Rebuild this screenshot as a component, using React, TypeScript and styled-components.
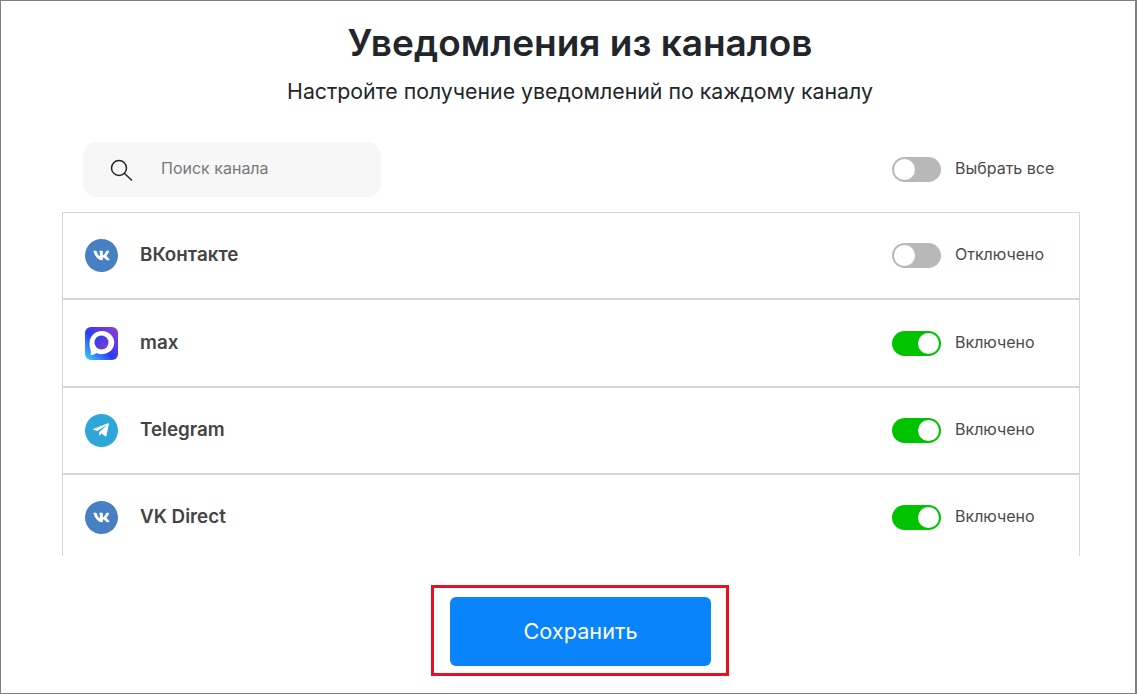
import React, { useState } from "react";
import styled, { createGlobalStyle } from "styled-components";
import { FaVk, FaTelegramPlane } from "react-icons/fa";

const GlobalStyle = createGlobalStyle`
  html, body {
    margin: 0;
    padding: 0;
    background: #fff;
    font-family: Inter, "Liberation Sans", sans-serif;
  }
  * { box-sizing: border-box; }
`;

const Page = styled.div`
  width: 1137px;
  height: 694px;
  border: 1px solid #808080;
  border-width: 1px 2px 1px 1px;
  background: #fff;
  padding-left: 24px;
  display: flex;
  flex-direction: column;
  align-items: center;
  overflow: hidden;
`;

const Title = styled.h1`
  margin: 17px 0 0;
  font-size: 37px;
  line-height: 50px;
  font-weight: 600;
  color: #22262a;
`;

const Subtitle = styled.p`
  margin: 8px 0 0;
  font-size: 21.3px;
  line-height: 30px;
  font-weight: 400;
  color: #22262a;
`;

const Content = styled.div`
  align-self: flex-start;
  margin: 0 0 0 37px;
  width: 1018px;
`;

const Toolbar = styled.div`
  display: flex;
  align-items: center;
  justify-content: space-between;
  height: 55px;
  margin-top: 36px;
  padding: 0 25px 0 21px;
`;

const Search = styled.div`
  width: 298px;
  height: 55px;
  border-radius: 14px;
  background: #f7f7f7;
  display: flex;
  align-items: center;
  gap: 28px;
  padding-left: 26px;
`;

const SearchInput = styled.input`
  border: 0;
  outline: 0;
  background: transparent;
  width: 200px;
  padding: 0 0 4px;
  font: 400 16px Inter, "Liberation Sans", sans-serif;
  color: #22262a;
  &::placeholder {
    color: #77797c;
    opacity: 1;
  }
`;

const List = styled.div`
  margin-top: 15px;
  height: 344px;
  overflow: hidden;
`;

const Row = styled.div`
  height: 87.4px;
  border: 1px solid #d6d6d6;
  display: flex;
  align-items: center;
  padding: 0 0 0 22px;
`;

const ChannelBadge = styled.span<{ $bg: string }>`
  width: 33px;
  height: 33px;
  border-radius: 50%;
  background: ${(p) => p.$bg};
  color: #fff;
  flex: none;
  display: flex;
  align-items: center;
  justify-content: center;
`;

const ChannelName = styled.span`
  margin-left: 22px;
  padding-bottom: 2px;
  font-size: 18.8px;
  font-weight: 600;
  color: #444444;
  flex: 1;
`;

const ToggleWrap = styled.label<{ $width: number }>`
  display: flex;
  align-items: center;
  gap: 14px;
  width: ${(p) => p.$width}px;
  cursor: pointer;
`;

const ToggleTrack = styled.span<{ $on: boolean }>`
  width: 49px;
  height: 25px;
  border-radius: 13px;
  background: ${(p) => (p.$on ? "#00c300" : "#b8b8b8")};
  padding: 2px;
  display: flex;
  justify-content: ${(p) => (p.$on ? "flex-end" : "flex-start")};
  flex: none;
`;

const ToggleKnob = styled.span`
  width: 21px;
  height: 21px;
  border-radius: 50%;
  background: #fff;
`;

const ToggleText = styled.span`
  padding-bottom: 3px;
  font-size: 16px;
  color: #4a4a4a;
  white-space: nowrap;
`;

const SaveHighlight = styled.div`
  margin-top: 29px;
  width: 298px;
  height: 91px;
  border: 3px solid #e81123;
  padding: 9px 15px 7px 16px;
`;

const SaveButton = styled.button`
  width: 100%;
  height: 100%;
  border: 0;
  border-radius: 6px;
  background: #0a84fa;
  color: #fff;
  font: 400 21.7px Inter, "Liberation Sans", sans-serif;
  padding: 0 0 2px;
  cursor: pointer;
`;

const MaxLogo = () => (
  <svg width="33" height="33" viewBox="0 0 33 33">
    <defs>
      <linearGradient id="maxBg" x1="0" y1="1" x2="1" y2="0">
        <stop offset="0" stopColor="#3fd8f8" />
        <stop offset="0.45" stopColor="#2a3cf5" />
        <stop offset="1" stopColor="#9a3ad0" />
      </linearGradient>
      <linearGradient id="maxDot" x1="0" y1="0" x2="1" y2="1">
        <stop offset="0" stopColor="#1f40f0" />
        <stop offset="1" stopColor="#8a3ad8" />
      </linearGradient>
    </defs>
    <rect width="33" height="33" rx="6" fill="url(#maxBg)" />
    <path
      d="M17 4C9.800 4 4.500 9.300 4.500 16.300c0 2.600.4 4.600 1 6.400.5 1.600.4 3.400.1 5.300 2.200.1 4.200-.6 5.800-2 1.700.8 3.600 1.200 5.600 1.200 7 0 12.300-5.300 12.300-11.600S24 4 17 4z"
      fill="#fff"
    />
    <circle cx="16.500" cy="15.500" r="7" fill="url(#maxDot)" />
  </svg>
);

const SearchIcon = () => (
  <svg width="24" height="24" viewBox="0 0 24 24" fill="none" stroke="#22262a" strokeWidth="1.500">
    <circle cx="10" cy="10" r="7.500" />
    <path d="M15.500 15.500l7 6.500" strokeLinecap="round" />
  </svg>
);

const channels = [
  { name: "ВКонтакте", kind: "vk", on: false },
  { name: "max", kind: "max", on: true },
  { name: "Telegram", kind: "tg", on: true },
  { name: "VK Direct", kind: "vk", on: true },
];

const ChannelIcon = ({ kind }: { kind: string }) => {
  if (kind === "max") return <MaxLogo />;
  if (kind === "tg") {
    return (
      <ChannelBadge $bg="#2ea6da">
        <FaTelegramPlane size={18} style={{ marginLeft: -2 }} />
      </ChannelBadge>
    );
  }
  return (
    <ChannelBadge $bg="#4680c2">
      <FaVk size={17} />
    </ChannelBadge>
  );
};

const Toggle = ({
  on,
  label,
  width,
  onClick,
}: {
  on: boolean;
  label: string;
  width: number;
  onClick: () => void;
}) => (
  <ToggleWrap $width={width} onClick={onClick}>
    <ToggleTrack $on={on}>
      <ToggleKnob />
    </ToggleTrack>
    <ToggleText>{label}</ToggleText>
  </ToggleWrap>
);

export default function App() {
  const [all, setAll] = useState(false);
  const [items, setItems] = useState(channels);

  return (
    <Page>
      <GlobalStyle />
      <Title>Уведомления из каналов</Title>
      <Subtitle>Настройте получение уведомлений по каждому каналу</Subtitle>
      <Content>
        <Toolbar>
          <Search>
            <SearchIcon />
            <SearchInput placeholder="Поиск канала" />
          </Search>
          <Toggle on={all} label="Выбрать все" width={163} onClick={() => setAll(!all)} />
        </Toolbar>
        <List>
          {items.map((c, i) => (
            <Row key={c.name}>
              <ChannelIcon kind={c.kind} />
              <ChannelName>{c.name}</ChannelName>
              <Toggle
                on={c.on}
                label={c.on ? "Включено" : "Отключено"}
                width={187}
                onClick={() =>
                  setItems(items.map((it, j) => (j === i ? { ...it, on: !it.on } : it)))
                }
              />
            </Row>
          ))}
        </List>
      </Content>
      <SaveHighlight>
        <SaveButton>Сохранить</SaveButton>
      </SaveHighlight>
    </Page>
  );
}
